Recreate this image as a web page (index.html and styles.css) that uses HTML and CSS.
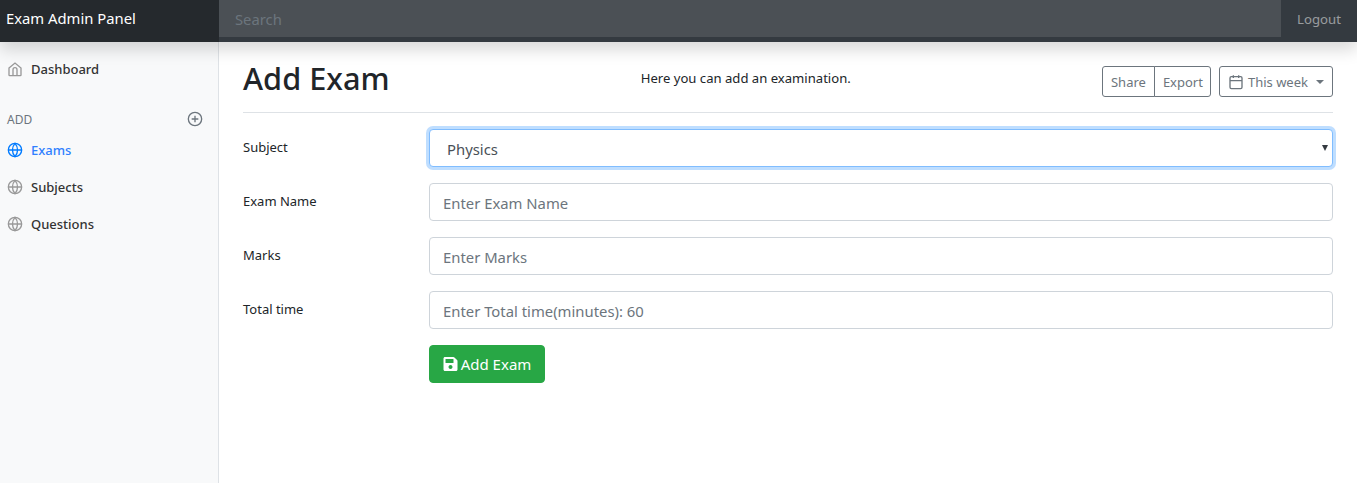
FILE: index.html
```html
<!DOCTYPE html>
<html lang="en">
<head>
<meta charset="utf-8">
<title>Exam Admin Panel</title>
<link rel="stylesheet" href="styles.css">
</head>
<body>
<header class="navbar">
  <a class="brand">Exam Admin Panel</a>
  <input class="search" type="text" placeholder="Search">
  <a class="logout">Logout</a>
</header>
<div class="shell">
  <nav class="sidebar">
    <a class="nav-link first">
      <svg class="ico" viewBox="0 0 24 24"><path d="M3 10.500 12 3l9 7.500V21a1 1 0 0 1-1 1H4a1 1 0 0 1-1-1z"/><path d="M9 22v-9a3 3 0 0 1 6 0v9"/></svg>
      Dashboard</a>
    <div class="side-head"><span>ADD</span>
      <svg class="plus" viewBox="0 0 24 24"><circle cx="12" cy="12" r="10"/><path d="M12 7v10M7 12h10"/></svg>
    </div>
    <a class="nav-link active">
      <svg class="ico" viewBox="0 0 24 24"><circle cx="12" cy="12" r="10"/><path d="M2 12h20M12 2a15 15 0 0 1 0 20a15 15 0 0 1 0-20z"/></svg>
      Exams</a>
    <a class="nav-link">
      <svg class="ico" viewBox="0 0 24 24"><circle cx="12" cy="12" r="10"/><path d="M2 12h20M12 2a15 15 0 0 1 0 20a15 15 0 0 1 0-20z"/></svg>
      Subjects</a>
    <a class="nav-link">
      <svg class="ico" viewBox="0 0 24 24"><circle cx="12" cy="12" r="10"/><path d="M2 12h20M12 2a15 15 0 0 1 0 20a15 15 0 0 1 0-20z"/></svg>
      Questions</a>
  </nav>
  <main class="content">
    <div class="head">
      <h1>Add Exam</h1>
      <p class="note">Here you can add an examination.</p>
      <div class="tools">
        <div class="group"><button class="btn">Share</button><button class="btn">Export</button></div>
        <button class="btn week">
          <svg class="cal" viewBox="0 0 24 24"><rect x="3" y="4" width="18" height="18" rx="2"/><path d="M16 2v4M8 2v4M3 10h18"/></svg>
          This week<span class="caret"></span></button>
      </div>
    </div>
    <form class="form">
      <label class="lbl">Subject</label>
      <div class="select focus"><span>Physics</span><span class="arrow"></span></div>
      <label class="lbl">Exam Name</label>
      <input class="field" type="text" placeholder="Enter Exam Name">
      <label class="lbl">Marks</label>
      <input class="field" type="text" placeholder="Enter Marks">
      <label class="lbl">Total time</label>
      <input class="field" type="text" placeholder="Enter Total time(minutes): 60">
      <span></span>
      <div><button class="save" type="button">
        <svg class="disk" viewBox="0 0 448 512"><path d="M433.900 129.900l-83.900-83.900A48 48 0 0 0 316.100 32H48C21.500 32 0 53.500 0 80v352c0 26.500 21.500 48 48 48h352c26.500 0 48-21.500 48-48V163.900a48 48 0 0 0-14.100-34zM224 416c-35.300 0-64-28.700-64-64s28.700-64 64-64 64 28.700 64 64-28.700 64-64 64zm96-304.500V212c0 6.600-5.400 12-12 12H76c-6.600 0-12-5.400-12-12V108c0-6.600 5.400-12 12-12h228.500c3.200 0 6.200 1.300 8.500 3.500l3.500 3.500c2.200 2.200 3.500 5.300 3.500 8.500z"/></svg>
        Add Exam</button></div>
    </form>
  </main>
</div>
</body>
</html>
```
FILE: styles.css
```css
* { box-sizing: border-box; }
html, body { margin: 0; height: 100%; overflow: hidden; }
body {
  font-family: "Noto Sans", "Open Sans", sans-serif;
  font-size: 14px;
  color: #212529;
  background: #fff;
  display: flex;
  flex-direction: column;
}
.navbar {
  height: 42px;
  flex: none;
  display: flex;
  background: #343a40;
  position: relative;
  z-index: 2;
  box-shadow: 0 8px 16px rgba(0,0,0,.15);
}
.brand {
  width: 219px;
  flex: none;
  background: #25292d;
  color: #fff;
  font-size: 14.800px;
  line-height: 37px;
  padding-left: 6px;
}
.search {
  flex: 1;
  height: 37px;
  border: 0;
  outline: 0;
  padding: 0 16px;
  background: #4b5055;
  font: inherit;
  font-size: 14.800px;
  color: #fff;
}
.search::placeholder { color: #6c757d; opacity: 1; }
.logout {
  width: 76px;
  flex: none;
  color: rgba(255,255,255,.5);
  font-size: 13.200px;
  line-height: 38px;
  padding-left: 16px;
}
.shell { flex: 1; display: flex; min-height: 0; }
.sidebar {
  width: 219px;
  flex: none;
  background: #f8f9fa;
  border-right: 1px solid #dee2e6;
  padding-top: 8px;
  font-weight: 500;
  font-size: 13px;
}
.nav-link {
  height: 37px;
  display: flex;
  align-items: center;
  gap: 8px;
  padding-left: 7px;
  color: #333;
}
.nav-link.first { height: 38px; }
.nav-link.active { color: #2f80ff; }
.ico, .plus, .cal { fill: none; stroke: currentColor; stroke-width: 2; }
.ico { width: 16px; height: 16px; stroke: #999; flex: none; }
.active .ico { stroke: #007bff; }
.side-head {
  margin-top: 19px;
  height: 24px;
  display: flex;
  align-items: center;
  justify-content: space-between;
  padding: 0 15px 0 7px;
  color: #6c757d;
  font-size: 12px;
  font-weight: 400;
}
.plus { width: 16px; height: 16px; }
.content { flex: 1; min-width: 0; padding: 0 24px; }
.head {
  height: 71px;
  margin-bottom: 16px;
  border-bottom: 1px solid #dee2e6;
  display: flex;
  align-items: flex-start;
  justify-content: space-between;
}
h1 { margin: 14px 0 0; font-size: 30.700px; font-weight: 500; line-height: 44px; }
.note { margin: 27px 0 0; font-size: 13.100px; line-height: 18px; color: #212529; }
.tools { display: flex; gap: 8px; margin-top: 24px; }
.group { display: flex; }
.btn {
  height: 31px;
  padding: 0 8px;
  background: #fff;
  border: 1px solid #6c757d;
  border-radius: 3px;
  color: #6c757d;
  font: inherit;
  font-size: 13px;
  display: flex;
  align-items: center;
}
.group .btn:first-child { border-radius: 3px 0 0 3px; }
.group .btn:last-child { border-radius: 0 3px 3px 0; margin-left: -1px; padding-right: 7px; }
.cal { width: 16px; height: 16px; margin-right: 4px; }
.caret {
  margin-left: 8px;
  border-top: 4px solid currentColor;
  border-left: 4px solid transparent;
  border-right: 4px solid transparent;
}
.form {
  display: grid;
  grid-template-columns: 186px 1fr;
  row-gap: 16px;
  align-items: start;
}
.lbl { font-size: 13px; line-height: 18px; padding-top: 9px; }
.select, .field {
  height: 38px;
  width: 100%;
  border: 1px solid #ced4da;
  border-radius: 4px;
  background: #fff;
  font: inherit;
  font-size: 14.850px;
  outline: 0;
  color: #495057;
  padding: 2px 13px 0;
}
.field::placeholder { color: #6c757d; opacity: 1; }
.select {
  display: flex;
  align-items: center;
  justify-content: space-between;
  padding: 2px 4px 0 17px;
}
.select.focus { border-color: #80bdff; box-shadow: 0 0 0 3px rgba(0,123,255,.25); }
.arrow {
  margin-top: -2px;
  border-top: 6px solid #343a40;
  border-left: 3px solid transparent;
  border-right: 3px solid transparent;
}
.save {
  height: 38px;
  width: 116px;
  background: #28a745;
  color: #fff;
  border: 1px solid #28a745;
  border-radius: 4px;
  font: inherit;
  font-size: 15px;
  display: flex;
  align-items: center;
  justify-content: center;
  gap: 3px;
  padding: 0;
}
.disk { width: 15px; height: 16px; fill: #fff; }
```
